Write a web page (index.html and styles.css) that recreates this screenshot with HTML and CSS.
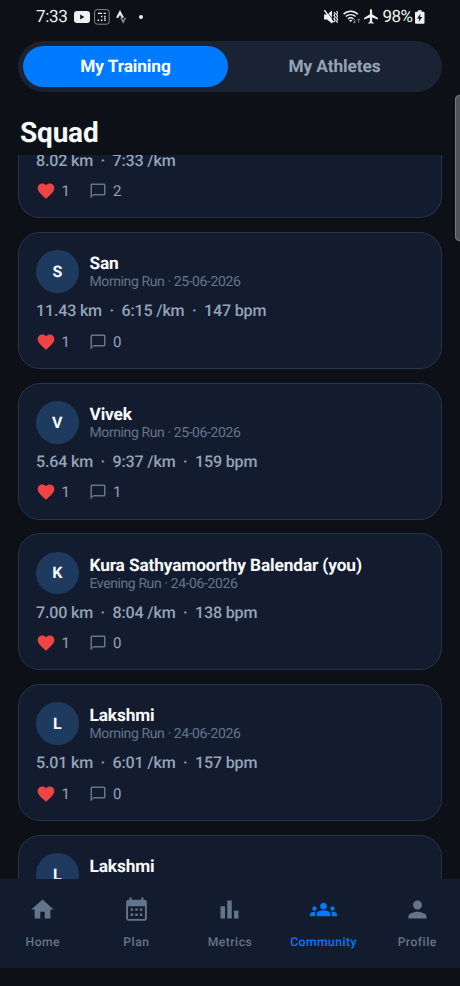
FILE: index.html
```html
<!DOCTYPE html>
<html lang="en">
<head>
<meta charset="utf-8">
<title>Squad</title>
<link rel="stylesheet" href="styles.css">
</head>
<body>
<svg class="defs" aria-hidden="true">
  <symbol id="heart" viewBox="0 0 24 24"><path d="M12 21.35l-1.45-1.32C5.4 15.36 2 12.28 2 8.5 2 5.42 4.42 3 7.5 3c1.74 0 3.41.81 4.5 2.09C13.09 3.81 14.76 3 16.5 3 19.58 3 22 5.42 22 8.5c0 3.78-3.4 6.86-8.55 11.54L12 21.35z"/></symbol>
  <symbol id="chat" viewBox="0 0 24 24"><path d="M20 2H4c-1.1 0-2 .9-2 2v18l4-4h14c1.1 0 2-.9 2-2V4c0-1.1-.9-2-2-2zm0 14H6l-2 2V4h16v12z"/></symbol>
</svg>
<div class="app">
  <header class="status">
    <div class="status-left">
      <span class="clock">7:33</span>
      <svg class="i-video" viewBox="0 0 16 12"><rect width="16" height="12" rx="3" fill="#f0f0f0"/><path d="M6.2 3.6v4.8L10.4 6z" fill="#0d1117"/></svg>
      <svg class="i-grid" viewBox="0 0 16 16"><rect x=".6" y=".6" width="14.6" height="14.6" rx="2.6" fill="none" stroke="#85878b"/><path d="M4 3.8h4v1.3H4zM9.6 3.8h2.2v1.3H9.6zM6.9 6.8h1.5v1.5H6.9zM10.2 6.8h1.5v1.5h-1.5zM3.6 10.5h1.5V12H3.6zM6.9 10.5h1.5V12H6.9zM10.2 10.5h1.5V12h-1.5zM10.2 8.7h1.5v1.2h-1.5z" fill="#f0f0f0"/></svg>
      <svg class="i-strava" viewBox="0 0 10.500 14"><path d="M4 0L0 7.800h2.400L4 4.700l1.600 3.100H8z" fill="#f0f0f0"/><path d="M8.500 7.800l-1.300 2.500-1.300-2.500H4.100l3.100 6 3-6z" fill="#888a8e"/></svg>
      <span class="dot"></span>
    </div>
    <div class="status-right">
      <svg class="i-mute" viewBox="0 0 14 14"><path d="M0 4.500h3L8 .5v13l-5-4H0z" fill="#f0f0f0"/><path d="M1.800 0l7 9.500" stroke="#0d1117" stroke-width=".8"/><path d="M.3 0l9 12.500" stroke="#f0f0f0" stroke-width="1.400"/><path d="M10 2l1.200 1.600L10 5.300 11.200 7 10 8.700l1.200 1.600L10 12M12.600 1l1 1.700-1 1.700 1 1.700-1 1.800 1 1.700-1 1.700 1 1.400" fill="none" stroke="#f0f0f0" stroke-width="1.200"/></svg>
      <svg class="i-wifi" viewBox="0 0 18 14"><g fill="none" stroke="#f0f0f0" stroke-width="1.4"><path d="M.6 4.2a10 10 0 0 1 14.2 0"/><path d="M2.8 6.600a7 7 0 0 1 9.800 0"/><path d="M5 8.900a4 4 0 0 1 5.400 0"/></g><path d="M6 10.300q1.700-1.200 3.400 0L7.700 12z" fill="#f0f0f0"/><path d="M11.400 9v4M10 11.700l1.400 1.500 1.400-1.500M15.700 12.800V9M14.300 10.300l1.400-1.500 1.400 1.500" fill="none" stroke="#777a7f"/></svg>
      <svg class="i-plane" viewBox="2 2 19 20"><path d="M21 16v-2l-8-5V3.5c0-.83-.67-1.5-1.5-1.5S10 2.67 10 3.5V9l-8 5v2l8-2.5V19l-2 1.5V22l3.5-1 3.5 1v-1.5L13 19v-5.5l8 2.5z" fill="#f0f0f0"/></svg>
      <span class="battery-text">98%</span>
      <svg class="i-battery" viewBox="0 0 10 14"><path d="M3 0h4v1.500h2q1 0 1 1V13q0 1-1 1H1q-1 0-1-1V2.500q0-1 1-1h2z" fill="#f0f0f0"/><path d="M5.800 3.500L2.200 8.500h2.200l-.5 3.500L7.800 7H5.400z" fill="#0d1117"/></svg>
    </div>
  </header>

  <nav class="switch">
    <a class="switch-item active">My Training</a>
    <a class="switch-item">My Athletes</a>
  </nav>

  <h1 class="title">Squad</h1>

  <main class="feed">
    <article class="card scrolled">
      <div class="stats">8.02 km  ·  7:33 /km</div>
      <div class="social"><svg class="heart"><use href="#heart"/></svg><span class="likes">1</span><svg class="chat"><use href="#chat"/></svg><span>2</span></div>
    </article>
    <article class="card">
      <div class="who"><div class="avatar">S</div><div class="names"><div class="name">San</div><div class="sub">Morning Run · 25-06-2026</div></div></div>
      <div class="stats">11.43 km  ·  6:15 /km  ·  147 bpm</div>
      <div class="social"><svg class="heart"><use href="#heart"/></svg><span class="likes">1</span><svg class="chat"><use href="#chat"/></svg><span>0</span></div>
    </article>
    <article class="card">
      <div class="who"><div class="avatar">V</div><div class="names"><div class="name">Vivek</div><div class="sub">Morning Run · 25-06-2026</div></div></div>
      <div class="stats">5.64 km  ·  9:37 /km  ·  159 bpm</div>
      <div class="social"><svg class="heart"><use href="#heart"/></svg><span class="likes">1</span><svg class="chat"><use href="#chat"/></svg><span>1</span></div>
    </article>
    <article class="card">
      <div class="who"><div class="avatar">K</div><div class="names"><div class="name">Kura Sathyamoorthy Balendar (you)</div><div class="sub">Evening Run · 24-06-2026</div></div></div>
      <div class="stats">7.00 km  ·  8:04 /km  ·  138 bpm</div>
      <div class="social"><svg class="heart"><use href="#heart"/></svg><span class="likes">1</span><svg class="chat"><use href="#chat"/></svg><span>0</span></div>
    </article>
    <article class="card">
      <div class="who"><div class="avatar">L</div><div class="names"><div class="name">Lakshmi</div><div class="sub">Morning Run · 24-06-2026</div></div></div>
      <div class="stats">5.01 km  ·  6:01 /km  ·  157 bpm</div>
      <div class="social"><svg class="heart"><use href="#heart"/></svg><span class="likes">1</span><svg class="chat"><use href="#chat"/></svg><span>0</span></div>
    </article>
    <article class="card">
      <div class="who"><div class="avatar">L</div><div class="names"><div class="name">Lakshmi</div></div></div>
    </article>
  </main>

  <nav class="tabs">
    <a class="tab"><svg viewBox="0 0 24 24"><path d="M10 20v-6h4v6h5v-8h3L12 3 2 12h3v8z"/></svg><span>Home</span></a>
    <a class="tab"><svg viewBox="0 0 24 24"><path fill-rule="evenodd" d="M19.200 3.300h-1V1.400h-2v1.900H7.800V1.400h-2v1.900h-1c-1.100 0-2 .9-2 2v14.800c0 1.100.9 2 2 2h14.400c1.100 0 2-.9 2-2V5.300c0-1.100-.9-2-2-2zM19.500 20.400h-15V9h15zM6.800 11h2.200v2.200H6.800zM10.900 11h2.200v2.200h-2.200zM15 11h2.200v2.200H15zM6.800 15.500h2.200v2.200H6.800zM10.900 15.500h2.200v2.200h-2.200zM15 15.500h2.200v2.200H15z"/></svg><span>Plan</span></a>
    <a class="tab"><svg viewBox="0 0 24 24"><path d="M4 9h4v11H4zM10 4h4v16h-4zM16 13h4v7h-4z"/></svg><span>Metrics</span></a>
    <a class="tab active"><svg viewBox="0 0 24 24"><path d="M12 12.750c1.630 0 3.070.39 4.240.9 1.080.48 1.760 1.560 1.760 2.730V18H6v-1.610c0-1.180.68-2.260 1.760-2.730 1.170-.52 2.610-.91 4.240-.91zM4 13c1.100 0 2-.9 2-2s-.9-2-2-2-2 .9-2 2 .9 2 2 2zm1.130 1.100C4.760 14.040 4.390 14 4 14c-.99 0-1.930.21-2.780.58C.48 14.900 0 15.620 0 16.430V18h4.500v-1.610c0-.83.23-1.610.63-2.290zM20 13c1.100 0 2-.9 2-2s-.9-2-2-2-2 .9-2 2 .9 2 2 2zm4 3.430c0-.81-.48-1.530-1.220-1.850-.85-.37-1.790-.58-2.780-.58-.39 0-.76.04-1.130.1.400.68.630 1.460.630 2.290V18H24v-1.570zM12 6c1.660 0 3 1.340 3 3s-1.340 3-3 3-3-1.340-3-3 1.340-3 3-3z"/></svg><span>Community</span></a>
    <a class="tab"><svg viewBox="0 0 24 24"><path d="M12 12c2.210 0 4-1.790 4-4s-1.790-4-4-4-4 1.790-4 4 1.790 4 4 4zm0 2c-2.670 0-8 1.340-8 4v2h16v-2c0-2.660-5.330-4-8-4z"/></svg><span>Profile</span></a>
  </nav>
  <div class="edge-handle"></div>
</div>
</body>
</html>
```
FILE: styles.css
```css
* { box-sizing: border-box; }

body {
  margin: 0;
  background: #0d1117;
  font-family: Roboto, sans-serif;
  color: #f8fafc;
  text-rendering: geometricPrecision;
}

.defs { display: none; }

.app {
  position: relative;
  display: flex;
  flex-direction: column;
  width: 460px;
  height: 986px;
  padding-bottom: 18px;
  overflow: hidden;
}

.status {
  display: flex;
  flex: none;
  justify-content: space-between;
  height: 41px;
  padding: 0 35.500px 0 36px;
  color: #f0f0f0;
}

.status-left,
.status-right {
  display: flex;
  align-items: center;
  height: 33px;
}

.clock { width: 37.500px; font-size: 17px; letter-spacing: -0.3px; }
.i-video { width: 16px; height: 12px; }
.i-grid { width: 16px; height: 16px; margin-left: 4px; }
.i-strava { width: 10.500px; height: 14px; margin-left: 6.500px; }
.dot { width: 4px; height: 4px; margin-left: 12.500px; border-radius: 50%; background: #f0f0f0; }
.i-mute { width: 14px; height: 14px; margin-right: 5px; }
.i-wifi { width: 18px; height: 14px; margin-right: 3px; }
.i-plane { width: 14px; height: 15px; margin-right: 4.500px; }
.battery-text { width: 31.500px; font-size: 17px; letter-spacing: -0.5px; }
.i-battery { width: 9.500px; height: 14px; margin-left: 1px; }

.switch {
  display: flex;
  flex: none;
  height: 51px;
  margin: 0 18px;
  padding: 5px;
  border-radius: 26px;
  background: #1a2333;
}

.switch-item {
  display: flex;
  flex: 1;
  align-items: center;
  justify-content: center;
  padding: 1px 0 0 4px;
  border-radius: 21px;
  color: #94a3b8;
  font-size: 17.300px;
  font-weight: 700;
  letter-spacing: -0.1px;
}

.switch-item.active { flex: 0 0 205px; padding-left: 0; background: #007aff; color: #fff; }

.title {
  flex: none;
  height: 63px;
  margin: 0;
  padding: 24px 0 0 20px;
  font-size: 28px;
  line-height: 33px;
  font-weight: 700;
  letter-spacing: -0.2px;
}

.feed {
  display: flex;
  flex: 1;
  flex-direction: column;
  justify-content: flex-start;
  gap: 13.700px;
  min-height: 0;
  padding: 0 18px;
  overflow: hidden;
}

.card {
  flex: none;
  height: 137px;
  padding: 17px;
  border: 1px solid #263449;
  border-radius: 22px;
  background: #131c2e;
}

.card.scrolled {
  height: 63.300px;
  padding-top: 0;
  border-top: 0;
  border-radius: 0 0 22px 22px;
}

.card.scrolled .stats { margin-top: -4.500px; }
.card.scrolled .social { margin-top: 10px; }

.who { display: flex; align-items: center; gap: 10.800px; height: 43px; }

.avatar {
  display: flex;
  align-items: center;
  justify-content: center;
  width: 42.700px;
  height: 42.700px;
  border-radius: 50%;
  background: #1e3a5f;
  font-size: 16px;
  font-weight: 700;
}

.names { height: 43px; padding-top: 4.300px; }
.name { font-size: 17.300px; line-height: 20px; font-weight: 700; letter-spacing: -0.13px; }
.sub { color: #64748b; font-size: 14px; line-height: 16px; letter-spacing: -0.400px; }

.stats {
  margin-top: 8.300px;
  color: #94a3b8;
  font-size: 16.100px;
  line-height: 20px;
  font-weight: 500;
  letter-spacing: -0.190px;
  white-space: pre;
}

.social {
  display: flex;
  align-items: center;
  height: 20px;
  margin-top: 10.500px;
  color: #94a3b8;
  font-size: 15px;
}

.heart { width: 20px; height: 20px; margin-right: 5.500px; fill: #ef4444; }
.likes { width: 27.500px; }
.chat { width: 18px; height: 18px; margin-right: 6px; fill: #64748b; }

.tabs {
  display: flex;
  flex: none;
  height: 89px;
  margin: 0 -4px;
  background: #131c2e;
}

.tab {
  display: flex;
  flex: 1;
  flex-direction: column;
  align-items: center;
  padding-top: 17px;
  color: #64748b;
  fill: currentColor;
  font-size: 12.200px;
  font-weight: 500;
  letter-spacing: 0.45px;
}

.tab.active { color: #007aff; }
.tab svg { width: 27px; height: 27px; margin-bottom: 12px; }

.edge-handle {
  position: absolute;
  top: 95px;
  right: -5px;
  width: 10px;
  height: 146px;
  border: 1px solid #77797c;
  border-radius: 4px;
  background: #515356;
}
```
